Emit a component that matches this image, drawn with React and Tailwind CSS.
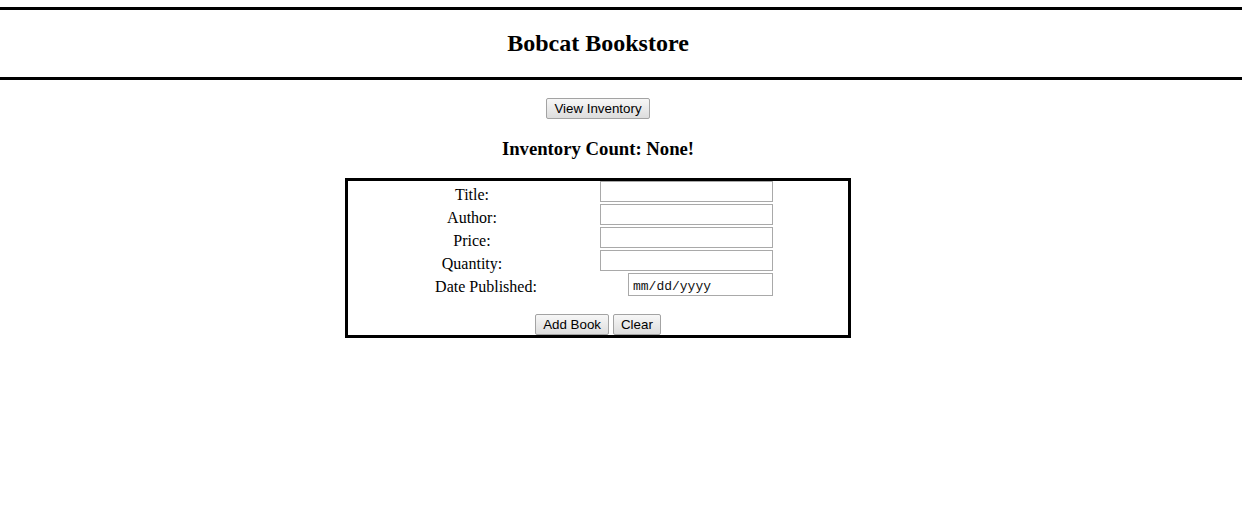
import React from 'react';

const serif = "font-['Liberation_Serif','Times_New_Roman',serif]";
const sans = "font-['Liberation_Sans',Arial,sans-serif]";

function Btn({ children }) {
  return (
    <button
      type="button"
      className={`${sans} h-[21px] rounded-[2px] border border-[#a3a3a3] bg-linear-to-b from-[#f7f7f7] to-[#dddddd] px-[7px] text-[13.33px] leading-[19px] text-black`}
    >
      {children}
    </button>
  );
}

const fields = [
  { label: 'Title:' },
  { label: 'Author:' },
  { label: 'Price:' },
  { label: 'Quantity:' },
];

export default function App() {
  return (
    <div className={`${serif} min-h-[523px] bg-white pt-[7px] text-black`}>
      <div className="flex h-[73px] items-center border-y-[3px] border-black pb-[2px]">
        <h2 className="m-0 w-[1196px] text-center text-[24px] font-bold">Bobcat Bookstore</h2>
      </div>

      <div className="flex w-[1196px] flex-col items-center">
        <div className="mt-[16px]">
          <Btn>View Inventory</Btn>
        </div>

        <h3 className="m-0 mt-[18px] text-[18.72px] font-bold leading-[22px]">Inventory Count: None!</h3>

        <form className="mt-[18px] flex w-[506px] flex-col border-[3px] border-black">
          <div className="flex flex-col gap-[2px]">
            {fields.map((f) => (
              <div key={f.label} className="flex h-[21px] items-start">
                <span className="mt-[5px] w-[248px] text-center text-[16px] leading-[18px]">{f.label}</span>
                <input
                  type="text"
                  className="ml-[4px] h-[21px] w-[173px] border border-[#a9a9a9] bg-white px-[2px] text-[13.33px] outline-none"
                />
              </div>
            ))}
            <div className="flex h-[23px] items-start">
              <span className="mt-[5px] w-[276px] text-center text-[16px] leading-[18px]">Date Published:</span>
              <div className="ml-[4px] flex h-[23px] w-[145px] items-center border border-[#a9a9a9] bg-white pl-[4px] pt-[3px]">
                <span className="font-['Liberation_Mono','Courier_New',monospace] text-[13px] leading-[15px] text-[#111]">
                  mm/dd/yyyy
                </span>
              </div>
            </div>
          </div>

          <div className="mt-[18px] flex justify-center gap-[4px]">
            <Btn>Add Book</Btn>
            <Btn>Clear</Btn>
          </div>
        </form>
      </div>
    </div>
  );
}
